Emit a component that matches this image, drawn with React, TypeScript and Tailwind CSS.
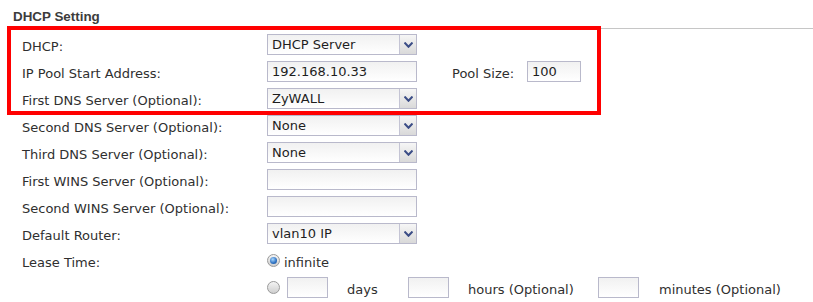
import React from "react";

const labelFont = "font-['DejaVu_Sans',sans-serif]";

function Arrow() {
  return (
    <div className="w-[17px] h-full border-l border-[#c4c4d4] bg-gradient-to-b from-[#f6f6f6] to-[#d9d9d9] flex items-center justify-center">
      <svg width="9" height="6" viewBox="0 0 9 6">
        <path d="M0.5 0.5 L4.5 4.8 L8.5 0.5" fill="none" stroke="#3b4d86" strokeWidth="2" />
      </svg>
    </div>
  );
}

function Select({ value }: { value: string }) {
  return (
    <div className="w-[150px] h-[21px] border border-[#b9b9cb] bg-gradient-to-b from-[#f1f1f1] to-white flex items-stretch">
      <div className="flex-1 pl-[4px] leading-[19px] text-[#1e1e1e]">{value}</div>
      <Arrow />
    </div>
  );
}

function Input({ value = "", w = "w-[150px]" }: { value?: string; w?: string }) {
  return (
    <div className={`${w} h-[21px] border border-[#b9b9cb] bg-gradient-to-b from-[#f1f1f1] to-white pl-[4px] leading-[19px] text-[#1e1e1e]`}>
      {value}
    </div>
  );
}

function Radio({ checked }: { checked?: boolean }) {
  return (
    <div className="w-[13px] h-[13px] rounded-full border border-[#9a9a9a] bg-gradient-to-b from-[#f4f4f4] to-[#cfcfcf] flex items-center justify-center">
      {checked && (
        <div className="w-[7px] h-[7px] rounded-full bg-[radial-gradient(circle_at_40%_35%,#a8d8ff,#2c6fc0_60%,#1b4f93)]" />
      )}
    </div>
  );
}

function Row({ label, children }: { label: string; children?: React.ReactNode }) {
  return (
    <div className="flex items-center h-[21px] mb-[6px]">
      <div className="w-[245px] pt-[4px]">{label}</div>
      {children}
    </div>
  );
}

export default function App() {
  return (
    <div className={`relative w-[813px] h-[302px] bg-white overflow-hidden ${labelFont} text-[13px] text-[#2f2f2f]`}>
      <div className="h-[29px] ml-[7px] border-b border-[#c6c6c6] pl-[6px] pt-[9px] leading-[16px] font-['Liberation_Sans',sans-serif] font-bold text-[13.4px] text-[#3c3c3c]">
        DHCP Setting
      </div>
      <div className="pl-[22px] pt-[5px]">
        <Row label="DHCP:">
          <Select value="DHCP Server" />
        </Row>
        <Row label="IP Pool Start Address:">
          <Input value="192.168.10.33" />
          <div className="ml-[35px] w-[75px] pt-[4px]">Pool Size:</div>
          <Input value="100" w="w-[54px]" />
        </Row>
        <Row label="First DNS Server (Optional):">
          <Select value="ZyWALL" />
        </Row>
        <Row label="Second DNS Server (Optional):">
          <Select value="None" />
        </Row>
        <Row label="Third DNS Server (Optional):">
          <Select value="None" />
        </Row>
        <Row label="First WINS Server (Optional):">
          <Input />
        </Row>
        <Row label="Second WINS Server (Optional):">
          <Input />
        </Row>
        <Row label="Default Router:">
          <Select value="vlan10 IP" />
        </Row>
        <Row label="Lease Time:">
          <Radio checked />
          <span className="ml-[4px] pt-[4px]">infinite</span>
        </Row>
        <div className="flex items-center h-[21px]">
          <div className="w-[245px]" />
          <Radio />
          <div className="ml-[7px]">
            <Input w="w-[41px]" />
          </div>
          <span className="ml-[19px] w-[61px] pt-[4px]">days</span>
          <Input w="w-[41px]" />
          <span className="ml-[19px] w-[130px] pt-[4px]">hours (Optional)</span>
          <Input w="w-[41px]" />
          <span className="ml-[20px] pt-[4px]">minutes (Optional)</span>
        </div>
      </div>
      <div className="absolute left-[7px] top-[26px] w-[594px] h-[89px] border-4 border-[#ff0000]" />
    </div>
  );
}
